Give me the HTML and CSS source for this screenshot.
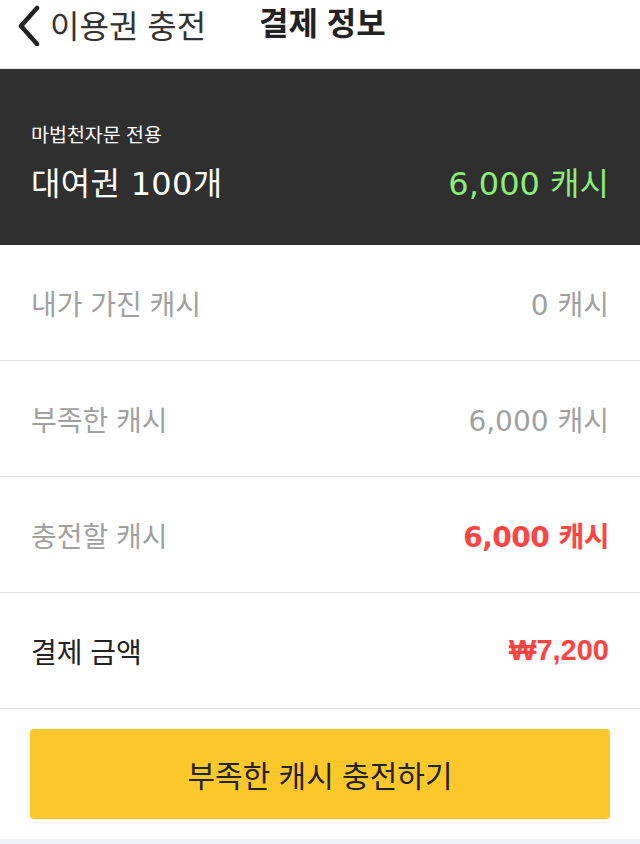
FILE: index.html
```html
<!DOCTYPE html>
<html lang="ko">
<head>
    <meta charset="UTF-8">
    <meta name="viewport" content="width=device-width, initial-scale=1.0">
    <title>결제 정보</title>
    <link rel="stylesheet" href="styles.css">
</head>
<body>
    <div class="header">
        <div class="back">
            <svg class="back-icon" width="26" height="42" viewBox="0 0 26 42">
                <path d="M21 4 L5 22 L21 40" fill="none" stroke="#222" stroke-width="4.5" stroke-linecap="round" stroke-linejoin="round"/>
            </svg>
            <span>이용권 충전</span>
        </div>
        <h1 class="title">결제 정보</h1>
    </div>

    <div class="product">
        <p class="product-sub">마법천자문 전용</p>
        <div class="product-row">
            <span class="product-name">대여권 100개</span>
            <span class="product-price">6,000 캐시</span>
        </div>
    </div>

    <div class="rows">
        <div class="row">
            <span class="label">내가 가진 캐시</span>
            <span class="value">0 캐시</span>
        </div>
        <div class="row">
            <span class="label">부족한 캐시</span>
            <span class="value">6,000 캐시</span>
        </div>
        <div class="row">
            <span class="label">충전할 캐시</span>
            <span class="value red">6,000 캐시</span>
        </div>
        <div class="row">
            <span class="label dark">결제 금액</span>
            <span class="value red total">₩7,200</span>
        </div>
    </div>

    <div class="action">
        <button class="charge-btn">부족한 캐시 충전하기</button>
    </div>
    <div class="bottom-bar"></div>
</body>
</html>
```

FILE: styles.css
```css
* {
    margin: 0;
    padding: 0;
    box-sizing: border-box;
}

body {
    font-family: "Liberation Sans", "Noto Sans CJK KR", sans-serif;
    background: #fff;
    color: #222;
    width: 640px;
    height: 844px;
    overflow: hidden;
}

/* wider digits, like the app font */
.product-row,
.value {
    font-family: "DejaVu Sans", "Noto Sans CJK KR", sans-serif;
}

.header {
    height: 69px;
    display: flex;
    align-items: flex-start;
    padding: 3px 0 0 16px;
    border-bottom: 1px solid #e2e2e2;
}

.back {
    display: flex;
    align-items: center;
    gap: 8px;
    font-size: 32px;
    color: #333;
    height: 42px;
}

.back-icon {
    margin-top: 2px;
}

.title {
    margin-left: 53px;
    font-size: 32px;
    font-weight: bold;
    line-height: 42px;
    color: #222;
}

.product {
    background: #2f2f2f;
    color: #fff;
    height: 176px;
    padding: 53px 31px 0;
    display: flex;
    flex-direction: column;
}

.product-sub {
    font-size: 19.5px;
    line-height: 26px;
    margin-bottom: 14px;
}

.product-row {
    display: flex;
    justify-content: space-between;
    align-items: center;
    font-size: 32px;
    line-height: 44px;
}

.product-name {
    letter-spacing: 0.3px;
}

.product-price {
    color: #8cef78;
}

.row {
    height: 116px;
    display: flex;
    justify-content: space-between;
    align-items: center;
    padding: 0 31px;
    border-bottom: 1px solid #e2e2e2;
    font-size: 28px;
}

.label {
    color: #a0a0a0;
}

.label.dark {
    color: #222;
}

.value {
    color: #a0a0a0;
}

.value.red {
    color: #ff4242;
    font-weight: bold;
    letter-spacing: -0.5px;
}

.value.total {
    font-family: "Liberation Sans", "Noto Sans CJK KR", sans-serif;
    font-size: 29px;
    letter-spacing: 0;
}

.action {
    padding: 20px 30px;
}

.charge-btn {
    width: 100%;
    height: 90px;
    border: none;
    border-radius: 4px;
    background: #fec82a;
    color: #222;
    font-family: inherit;
    font-size: 30px;
}

.bottom-bar {
    height: 10px;
    background: #eff0f4;
}
```
